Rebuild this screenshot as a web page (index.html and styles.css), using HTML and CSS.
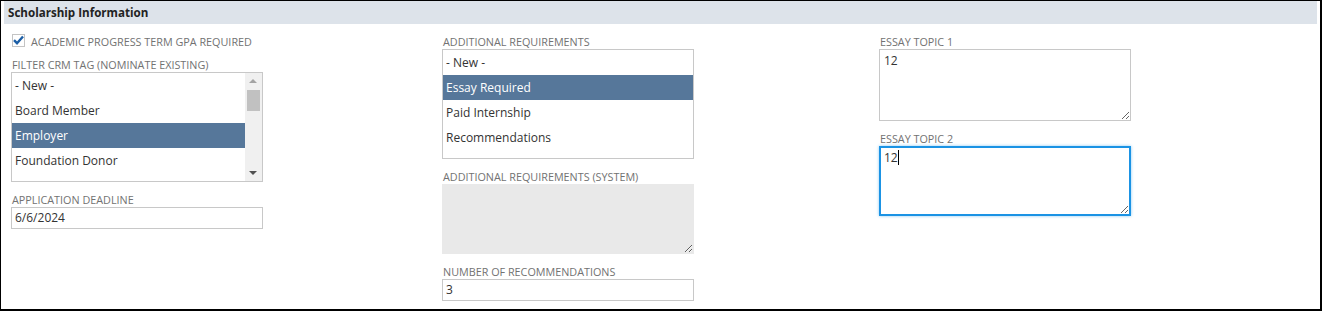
FILE: index.html
```html
<!DOCTYPE html>
<html lang="en">
<head>
    <meta charset="UTF-8">
    <title>Scholarship Information</title>
    <link rel="stylesheet" href="styles.css">
</head>
<body>
    <div class="page">
        <div class="section-head">Scholarship Information</div>

        <div class="form">
            <div class="col">
                <div class="check-row">
                    <span class="checkbox">
                        <svg width="11" height="10" viewBox="0 0 11 10"><path d="M1 5.2 L4 8.2 L10 1.5" fill="none" stroke="#1d5fa6" stroke-width="2.4"/></svg>
                    </span>
                    <span class="label">Academic Progress Term GPA Required</span>
                </div>
                <div class="field">
                    <div class="label">Filter CRM Tag (Nominate Existing)</div>
                    <div class="listbox with-scroll">
                        <ul class="options">
                            <li>- New -</li>
                            <li>Board Member</li>
                            <li class="selected">Employer</li>
                            <li>Foundation Donor</li>
                        </ul>
                        <div class="scrollbar">
                            <span class="arrow up"></span>
                            <span class="thumb"></span>
                            <span class="arrow down"></span>
                        </div>
                    </div>
                </div>
                <div class="field">
                    <div class="label">Application Deadline</div>
                    <div class="input">6/6/2024</div>
                </div>
            </div>

            <div class="col">
                <div class="field">
                    <div class="label">Additional Requirements</div>
                    <div class="listbox">
                        <ul class="options">
                            <li>- New -</li>
                            <li class="selected">Essay Required</li>
                            <li>Paid Internship</li>
                            <li>Recommendations</li>
                        </ul>
                    </div>
                </div>
                <div class="field">
                    <div class="label">Additional Requirements (System)</div>
                    <div class="textarea disabled"></div>
                </div>
                <div class="field">
                    <div class="label">Number of Recommendations</div>
                    <div class="input">3</div>
                </div>
            </div>

            <div class="col">
                <div class="field">
                    <div class="label">Essay Topic 1</div>
                    <div class="textarea tall">12</div>
                </div>
                <div class="field">
                    <div class="label">Essay Topic 2</div>
                    <div class="textarea focused">12<span class="caret"></span></div>
                </div>
            </div>
        </div>
    </div>
</body>
</html>
```

FILE: styles.css
```css
body {
    margin: 0;
    font-family: "Open Sans", Arial, sans-serif;
    color: #333;
}

.page {
    width: 1322px;
    height: 311px;
    box-sizing: border-box;
    border: 1px solid #000;
    border-right-width: 2px;
    border-bottom-width: 2px;
    background: #fff;
}

.section-head {
    margin: 0 3px;
    height: 23px;
    line-height: 23px;
    padding-left: 4px;
    background: #dde3ea;
    font-size: 11.6px;
    font-weight: bold;
    color: #222;
}

.form {
    display: grid;
    grid-template-columns: 431px 437px 252px;
    padding: 11px 0 0 10px;
}

.col {
    display: flex;
    flex-direction: column;
}

.label {
    font-size: 10.8px;
    line-height: 14px;
    color: #727272;
    text-transform: uppercase;
    padding-left: 1px;
}

.check-row {
    display: flex;
    align-items: center;
    height: 14px;
    margin-bottom: 9px;
}

.check-row .label {
    padding-left: 6px;
}

.checkbox {
    width: 11px;
    height: 11px;
    margin: -4px 0 0 1px;
    border: 1px solid #c4c4c4;
    display: flex;
    align-items: center;
    justify-content: center;
}

.field {
    margin-bottom: 11px;
}

.listbox {
    width: 252px;
    height: 110px;
    box-sizing: border-box;
    border: 1px solid #c8c8c8;
    display: flex;
}

.options {
    list-style: none;
    margin: 0;
    padding: 0;
    flex: 1;
}

.options li {
    height: 25px;
    line-height: 25px;
    padding-left: 3px;
    font-size: 12px;
    color: #333;
}

.options li.selected {
    background: #56779a;
    color: #fff;
}

.scrollbar {
    width: 17px;
    background: #f0f0f0;
    position: relative;
}

.scrollbar .thumb {
    position: absolute;
    left: 2px;
    top: 17px;
    width: 13px;
    height: 21px;
    background: #c1c1c1;
}

.scrollbar .arrow {
    position: absolute;
    left: 4px;
    width: 0;
    height: 0;
    border-left: 4px solid transparent;
    border-right: 4px solid transparent;
}

.scrollbar .up {
    top: 6px;
    border-bottom: 4px solid #a3a3a3;
}

.scrollbar .down {
    bottom: 6px;
    border-top: 4px solid #505050;
}

.input {
    width: 252px;
    height: 22px;
    box-sizing: border-box;
    border: 1px solid #c8c8c8;
    padding-left: 3px;
    font-size: 12px;
    line-height: 20px;
    color: #333;
}

.textarea {
    width: 252px;
    height: 70px;
    box-sizing: border-box;
    border: 1px solid #c8c8c8;
    padding: 3px 4px;
    font-size: 12px;
    line-height: 16px;
    color: #333;
    overflow: auto;
    resize: both;
}

.textarea.tall {
    height: 72px;
}

.textarea.disabled {
    background: #e9e9e9;
    border-color: #e9e9e9;
}

.textarea.focused {
    border: 2px solid #1b93e4;
    box-shadow: 0 0 3px #8ccaf3;
    padding: 2px 3px;
}

.caret {
    display: inline-block;
    width: 1px;
    height: 15px;
    background: #000;
    vertical-align: -3px;
}
```
